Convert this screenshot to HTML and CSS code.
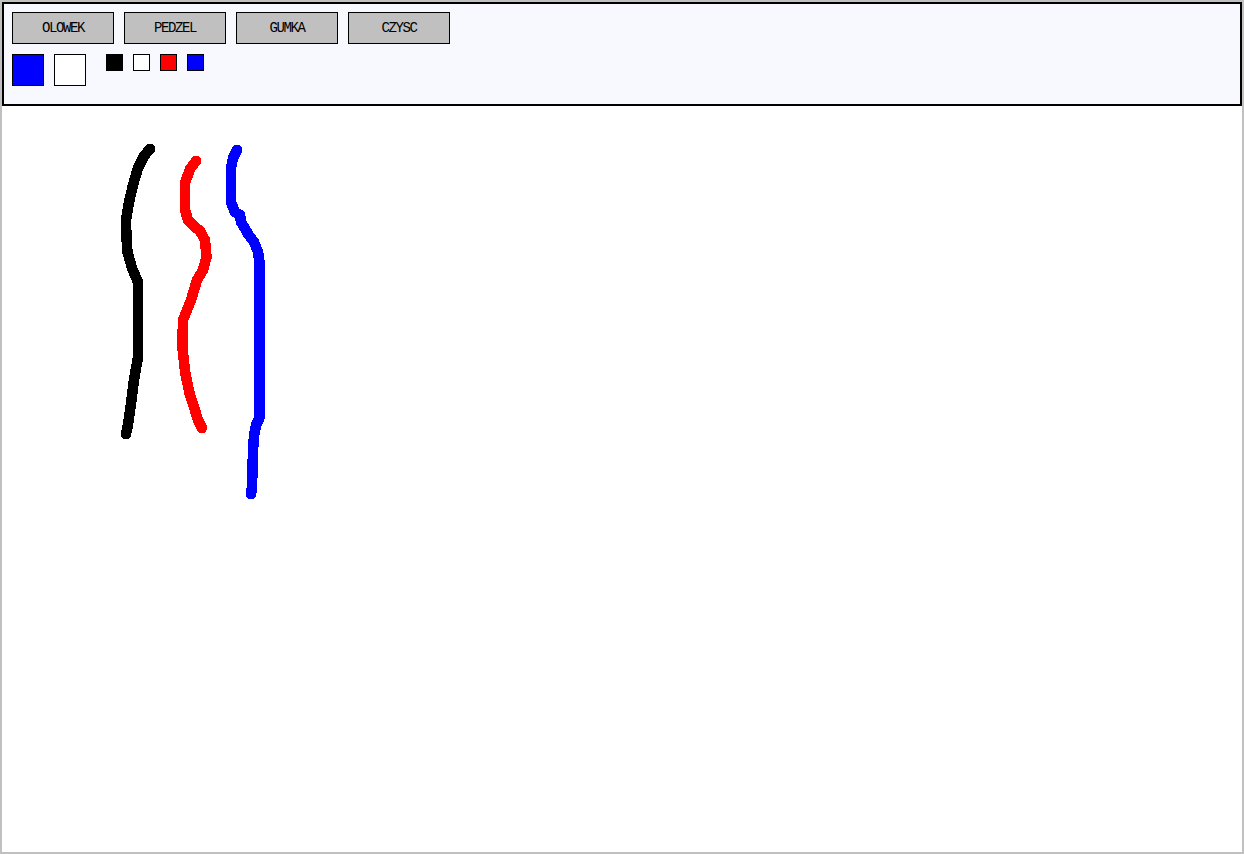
FILE: index.html
```html
<!DOCTYPE html>
<html>
<head>
<meta charset="utf-8">
<title>Paint</title>
<link rel="stylesheet" href="styles.css">
</head>
<body>
<div class="app">
  <div class="toolbar">
    <div class="tools">
      <button class="tool">OLOWEK</button>
      <button class="tool">PEDZEL</button>
      <button class="tool">GUMKA</button>
      <button class="tool">CZYSC</button>
    </div>
    <div class="colors">
      <div class="current">
        <span class="big swatch-blue"></span>
        <span class="big swatch-white"></span>
      </div>
      <div class="palette">
        <span class="small swatch-black"></span>
        <span class="small swatch-white"></span>
        <span class="small swatch-red"></span>
        <span class="small swatch-blue"></span>
      </div>
    </div>
  </div>
  <div class="canvas">
    <svg class="drawing" width="1240" height="746" viewBox="2 106 1240 746" shape-rendering="crispEdges">
      <polyline class="stroke" stroke="#000000" points="150,149 144,156 138,168 133,185 129,202 126,220 126.5,238 127.5,252 132,268 138,282 138,357 134,380 130.5,407 128,425 126,434"/>
      <polyline class="stroke" stroke="#ff0000" points="196,161 190,169 185,183 185,210 188,220 195,227 200,231 205,240 206.5,257 203,270 197,280 191,300 183,320 182.3,347 185.3,373 189.5,393 194,407 198,420 202,428"/>
      <polyline class="stroke" stroke="#0000ff" points="237,150 233,158 231,168 231,202 234.7,212 240,215 241,222 248.7,235 254,242 258,252 259.5,262 259.5,418 256,425 254,436 253,450 252.5,470 252,487 251,494"/>
    </svg>
  </div>
</div>
</body>
</html>
```
FILE: styles.css
```css
html, body {
  margin: 0;
  padding: 0;
  background: #ffffff;
}

.app {
  width: 1244px;
  height: 854px;
  box-sizing: border-box;
  border: 2px solid #c0c0c0;
  display: flex;
  flex-direction: column;
  background: #ffffff;
}

.toolbar {
  height: 104px;
  box-sizing: border-box;
  border: 2px solid #000000;
  background: #f8f8ff;
  padding: 8px;
  display: flex;
  flex-direction: column;
  gap: 10px;
}

.tools {
  display: flex;
  gap: 10px;
}

.tool {
  width: 102px;
  height: 32px;
  box-sizing: border-box;
  margin: 0;
  padding: 0;
  border: 1px solid #000000;
  border-radius: 0;
  background: #c0c0c0;
  color: #000000;
  font-family: "Liberation Mono", "DejaVu Sans Mono", monospace;
  font-size: 14px;
  letter-spacing: -1.4px;
  line-height: 30px;
  text-align: center;
}

.colors {
  display: flex;
  gap: 20px;
  align-items: flex-start;
}

.current, .palette {
  display: flex;
  gap: 10px;
}

.big {
  display: block;
  width: 32px;
  height: 32px;
  box-sizing: border-box;
  border: 1px solid #000000;
}

.small {
  display: block;
  width: 17px;
  height: 17px;
  box-sizing: border-box;
  border: 1px solid #000000;
}

.swatch-blue { background: #0000ff; }
.swatch-white { background: #ffffff; }
.swatch-black { background: #000000; }
.swatch-red { background: #ff0000; }

.canvas {
  flex: 1;
  background: #ffffff;
}

.drawing {
  display: block;
}

.stroke {
  fill: none;
  stroke-width: 10.5;
  stroke-linecap: round;
  stroke-linejoin: round;
}
```
